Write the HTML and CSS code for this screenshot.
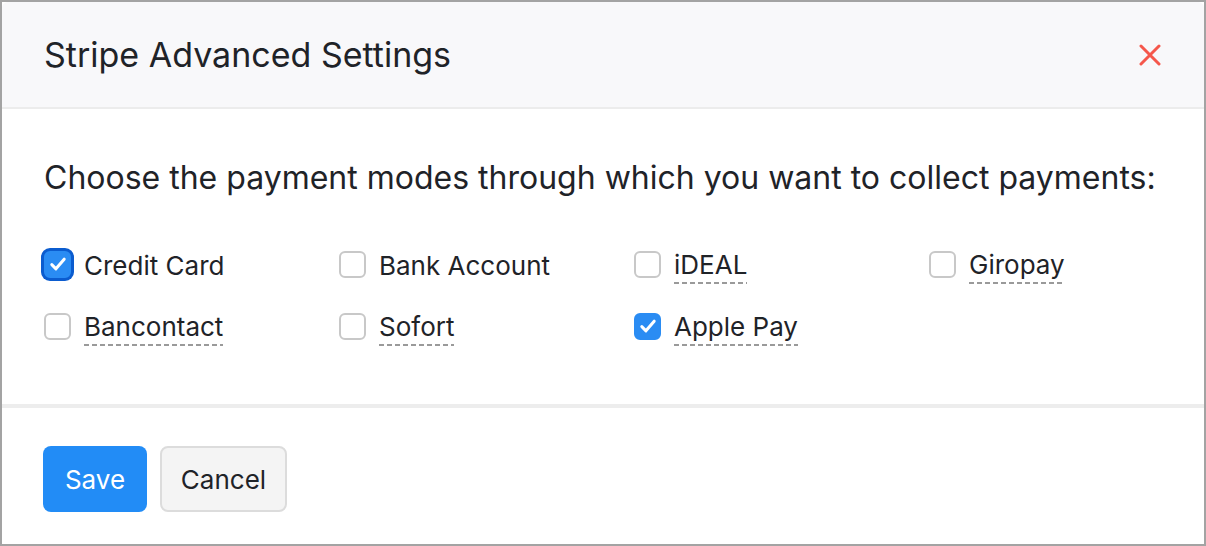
FILE: index.html
```html
<!DOCTYPE html>
<html>
<head>
<meta charset="utf-8">
<link rel="stylesheet" href="styles.css">
</head>
<body>
<div class="frame">
  <div class="modal">
    <div class="modal-header">
      <h1 class="title">Stripe Advanced Settings</h1>
      <button class="close" aria-label="Close">
        <svg width="22" height="22" viewBox="0 0 22 22"><path d="M2 2 L20 20 M20 2 L2 20" stroke="#f5574b" stroke-width="3" stroke-linecap="round"/></svg>
      </button>
    </div>
    <div class="modal-body">
      <p class="lead">Choose the payment modes through which you want to collect payments:</p>
      <div class="options">
        <label class="option"><span class="box checked focus"><svg viewBox="0 0 16 16"><path d="M3.5 8.5 L6.5 11.5 L12.5 4.5" fill="none" stroke="#fff" stroke-width="2.2" stroke-linecap="round" stroke-linejoin="round"/></svg></span><span class="text">Credit Card</span></label>
        <label class="option"><span class="box"></span><span class="text">Bank Account</span></label>
        <label class="option"><span class="box"></span><span class="text dashed">iDEAL</span></label>
        <label class="option"><span class="box"></span><span class="text dashed">Giropay</span></label>
        <label class="option"><span class="box"></span><span class="text dashed">Bancontact</span></label>
        <label class="option"><span class="box"></span><span class="text dashed">Sofort</span></label>
        <label class="option"><span class="box checked"><svg viewBox="0 0 16 16"><path d="M3.5 8.5 L6.5 11.5 L12.5 4.5" fill="none" stroke="#fff" stroke-width="2.2" stroke-linecap="round" stroke-linejoin="round"/></svg></span><span class="text dashed">Apple Pay</span></label>
      </div>
    </div>
    <div class="modal-footer">
      <button class="btn btn-primary">Save</button>
      <button class="btn btn-secondary">Cancel</button>
    </div>
  </div>
</div>
</body>
</html>
```
FILE: styles.css
```css
* { box-sizing: border-box; }
html, body { margin: 0; padding: 0; }
body {
  background: #ffffff;
  font-family: Inter, "Noto Sans", sans-serif;
  color: #1f2328;
}
.frame {
  width: 1206px;
  height: 546px;
  border: 2px solid #a3a3a3;
  background: #fff;
}
.modal {
  height: 100%;
  border-radius: 6px;
  overflow: hidden;
  background: #fff;
  display: flex;
  flex-direction: column;
}
.modal-header {
  height: 107px;
  background: #f8f8fa;
  border-bottom: 2px solid #ececec;
  display: flex;
  align-items: center;
  justify-content: space-between;
  padding: 0 43px 0 42px;
}
.title {
  margin: 0;
  font-size: 34px;
  font-weight: 400;
  color: #1f2328;
  letter-spacing: 0;
}
.close {
  background: none;
  border: 0;
  padding: 0;
  width: 22px;
  height: 22px;
  display: flex;
  cursor: pointer;
}
.modal-body {
  padding: 50px 42px 0 42px;
  height: 299px;
  border-bottom: 4px solid #ededed;
}
.lead {
  margin: 0 0 48px;
  font-size: 32px;
  line-height: 38px;
  color: #1f2328;
}
.options {
  display: grid;
  grid-template-columns: repeat(4, 295px);
  row-gap: 24px;
}
.option {
  display: flex;
  align-items: center;
  gap: 13px;
  height: 38px;
  font-size: 26px;
  color: #1f2328;
}
.box {
  width: 27px;
  height: 27px;
  border: 2px solid #c8c8c8;
  border-radius: 6px;
  background: #fff;
  display: flex;
  align-items: center;
  justify-content: center;
  flex: none;
}
.box svg { width: 22px; height: 22px; }
.box.checked {
  background: #2a8cf3;
  border-color: #2a8cf3;
}
.box.focus {
  border-color: #2a8cf3;
  box-shadow: 0 0 0 3px #0b5ccf;
}
.text {
  line-height: 34px;
  padding-top: 4px;
}
.text.dashed {
  padding-bottom: 2px;
  background-image: repeating-linear-gradient(to right, #9a9a9a 0 5px, transparent 5px 8px);
  background-size: 100% 2px;
  background-position: left bottom;
  background-repeat: no-repeat;
}
.modal-footer {
  flex: 1;
  display: flex;
  align-items: flex-start;
  gap: 13px;
  padding: 38px 41px 0 41px;
}
.btn {
  height: 66px;
  border-radius: 8px;
  font-family: Inter, "Noto Sans", sans-serif;
  font-size: 26px;
  padding: 0;
  cursor: pointer;
}
.btn-primary {
  background: #228cf6;
  color: #fff;
  border: 0;
  width: 104px;
}
.btn-secondary {
  background: #f4f4f4;
  color: #1f2328;
  border: 2px solid #dcdcdc;
  width: 127px;
}
```
